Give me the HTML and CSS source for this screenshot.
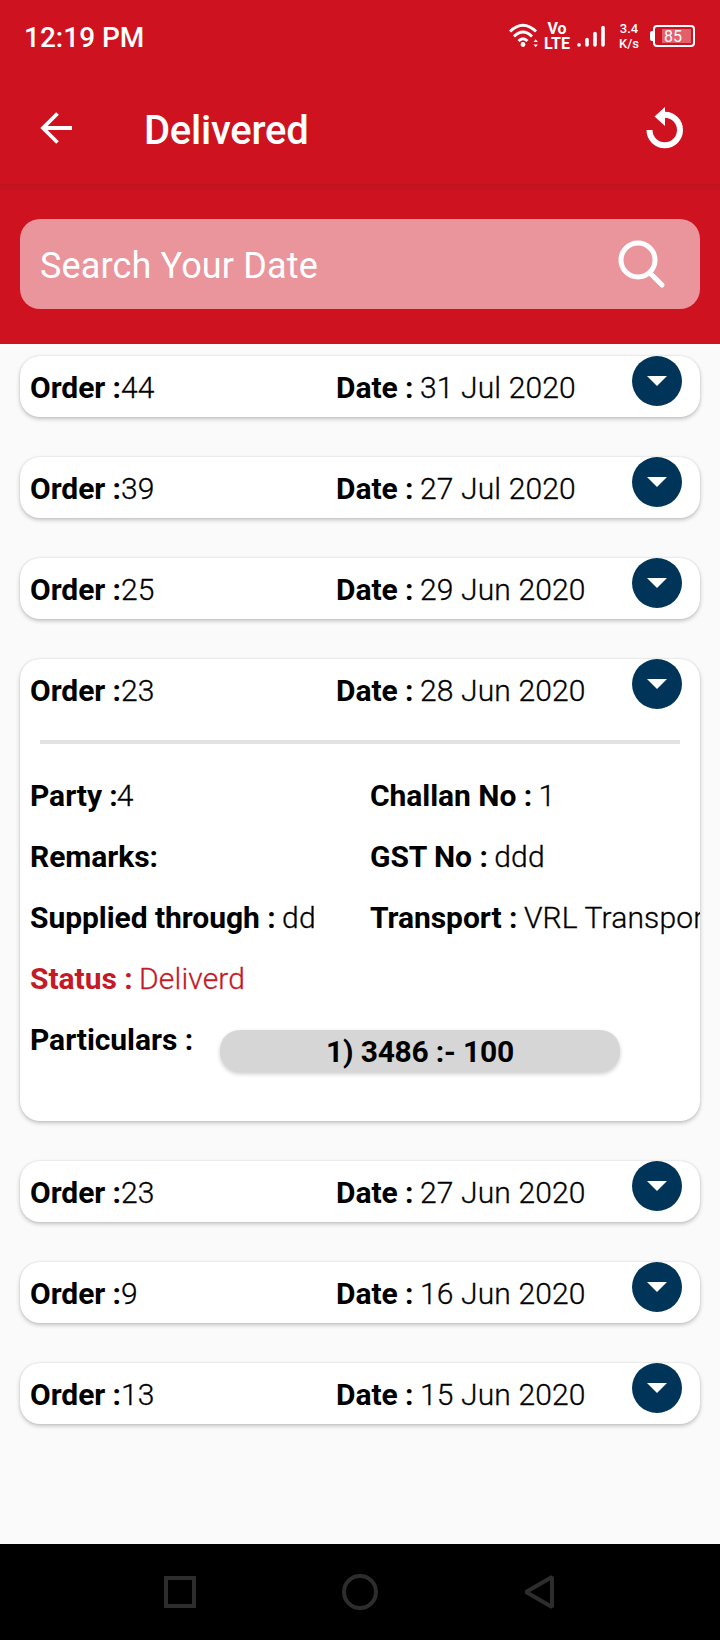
FILE: index.html
```html
<!DOCTYPE html>
<html lang="en">
<head>
<meta charset="utf-8">
<title>Delivered</title>
<link rel="stylesheet" href="styles.css">
</head>
<body>
<svg class="defs" width="0" height="0"><symbol id="toggle" viewBox="0 0 50 50"><circle cx="25" cy="25" r="25" fill="#003459"/><path d="M15 20h20L25 30z" fill="#fff"/></symbol></svg>
<div class="screen">
  <div class="statusbar">
    <span class="time">12:19 PM</span>
    <div class="indicators">
      <svg class="wifi" width="30" height="26" viewBox="0 0 30 26" fill="none" stroke="#fff" stroke-width="3"><path d="M1 8.500Q14 -4 27 8.500M5 13.500Q14 4.500 23 13.500M9.500 18Q14 13.500 18.500 18"/><circle cx="14" cy="21.500" r="2.400" fill="#fff" stroke="none"/><path d="M24.500 19l2.200-2.800 2.200 2.800zM24.500 21.500l2.200 2.800 2.200-2.800z" fill="#fff" stroke="none"/></svg>
      <div class="volte"><span>Vo</span><span>LTE</span></div>
      <svg class="signal" width="28" height="24" viewBox="0 0 28 24" stroke="#fff" stroke-width="3.600" stroke-linecap="round"><path d="M2 20.800v.2M10 15.500v5.500M18 9.500V21M26 3.500V21"/></svg>
      <div class="speed"><span>3.4</span><span>K/s</span></div>
      <div class="battery"><span class="nub"></span><span class="cell"><span class="level">85</span></span></div>
    </div>
  </div>
  <header class="toolbar">
    <svg class="back" width="32" height="32" viewBox="0 0 32 32" fill="none" stroke="#fff" stroke-width="3.800"><path d="M32 16H3M17.500 1.500L3 16l14.500 14.500"/></svg>
    <h1>Delivered</h1>
    <svg class="refresh" width="38" height="44" viewBox="0 0 38 44"><path d="M3.500 23a15.250 15.250 0 1 0 15.250-15.250" fill="none" stroke="#fff" stroke-width="6"/><path d="M8.500 9.500L19 0v19z" fill="#fff"/></svg>
  </header>
  <section class="searcharea">
    <div class="searchbox"><span class="placeholder">Search Your Date</span>
      <svg width="50" height="50" viewBox="0 0 50 50" fill="none" stroke="#fff" stroke-width="5" stroke-linecap="round"><circle cx="22" cy="21" r="17"/><path d="M34 34L46 46"/></svg>
    </div>
  </section>
  <main class="orders">
    <article class="card"><div class="head"><p class="order"><b>Order :</b>44</p><p><b>Date :</b> 31 Jul 2020</p></div><svg class="toggle"><use href="#toggle"/></svg></article>
    <article class="card"><div class="head"><p class="order"><b>Order :</b>39</p><p><b>Date :</b> 27 Jul 2020</p></div><svg class="toggle"><use href="#toggle"/></svg></article>
    <article class="card"><div class="head"><p class="order"><b>Order :</b>25</p><p><b>Date :</b> 29 Jun 2020</p></div><svg class="toggle"><use href="#toggle"/></svg></article>
    <article class="card open"><div class="head"><p class="order"><b>Order :</b>23</p><p><b>Date :</b> 28 Jun 2020</p></div><svg class="toggle"><use href="#toggle"/></svg>
      <div class="divider"></div>
      <div class="details">
        <p><b>Party :</b>4</p><p><b>Challan No :</b> 1</p>
        <p><b>Remarks:</b></p><p><b>GST No :</b> ddd</p>
        <p><b>Supplied through :</b> dd</p><p><b>Transport :</b> VRL Transport</p>
        <p class="state"><b>Status :</b> Deliverd</p>
      </div>
      <div class="particulars"><p><b>Particulars :</b></p><div class="pill"><b>1) 3486 :- 100</b></div></div>
    </article>
    <article class="card"><div class="head"><p class="order"><b>Order :</b>23</p><p><b>Date :</b> 27 Jun 2020</p></div><svg class="toggle"><use href="#toggle"/></svg></article>
    <article class="card"><div class="head"><p class="order"><b>Order :</b>9</p><p><b>Date :</b> 16 Jun 2020</p></div><svg class="toggle"><use href="#toggle"/></svg></article>
    <article class="card"><div class="head"><p class="order"><b>Order :</b>13</p><p><b>Date :</b> 15 Jun 2020</p></div><svg class="toggle"><use href="#toggle"/></svg></article>
  </main>
  <nav class="navbar">
    <svg width="36" height="36" viewBox="0 0 36 36"><path d="M4 4h28v28H4z"/></svg>
    <svg width="36" height="36" viewBox="0 0 36 36"><circle cx="18" cy="18" r="16"/></svg>
    <svg width="36" height="36" viewBox="0 0 36 36"><path d="M31 3v30L5 18z" stroke-linejoin="bevel"/></svg>
  </nav>
</div>
</body>
</html>
```
FILE: styles.css
```css
* { box-sizing: border-box; }
body { margin: 0; font-family: Roboto, "Liberation Sans", sans-serif; color: #000; }
p, h1 { margin: 0; }
.defs { position: absolute; }
.screen { width: 720px; height: 1640px; display: flex; flex-direction: column; background: #fafafa; overflow: hidden; }
.statusbar { height: 72px; background: #ce121f; color: #fff; display: flex; justify-content: space-between; padding: 0 25px 0 24px; }
.time { font-size: 28px; font-weight: 500; line-height: 32px; padding-top: 22px; }
.indicators { display: flex; align-items: flex-start; padding-top: 22px; }
.wifi { margin-top: 1px; }
.volte { display: flex; flex-direction: column; align-items: center; width: 26px; margin-left: 5px; font-size: 16px; font-weight: 700; line-height: 15px; margin-top: -1px; }
.signal { margin: 2px 0 0 7px; }
.speed { display: flex; flex-direction: column; align-items: center; width: 22px; margin: -1px 10px 0 13px; font-size: 13px; font-weight: 500; line-height: 15px; }
.battery { display: flex; align-items: center; padding-top: 3px; }
.nub { width: 3px; height: 10px; background: #fff; border-radius: 2px 0 0 2px; }
.cell { width: 42px; height: 22px; border: 2px solid #fff; border-radius: 4px; padding: 2px 2px 2px 7px; display: flex; }
.level { flex: 1; background: #e2606a; font-size: 16px; line-height: 15px; padding-left: 2px; }
.toolbar { height: 112px; background: #ce121f; color: #fff; display: flex; align-items: flex-start; padding: 0 36px 0 40px; }
.back { margin-top: 40px; }
h1 { font-size: 40px; font-weight: 500; line-height: 48px; letter-spacing: -.25px; margin: 35px auto 0 72px; }
.refresh { margin-top: 35px; }
.searcharea { height: 160px; background: linear-gradient(#bd141f, #ce121f 7px); padding: 35px 20px; }
.searchbox { height: 90px; background: #e9959b; border-radius: 20px; display: flex; align-items: center; justify-content: space-between; padding: 0 34px 0 20px; }
.placeholder { color: #fff; font-size: 36px; line-height: 42px; letter-spacing: .15px; padding-top: 4px; }
.orders { flex: 1; display: flex; flex-direction: column; gap: 40px; padding: 12px 20px; }
.card { position: relative; height: 61px; flex: none; background: #fff; border-radius: 20px; box-shadow: 0 2px 4px rgba(0,0,0,.22), 0 0 2px rgba(0,0,0,.12); font-size: 30px; font-weight: 300; letter-spacing: .15px; -webkit-text-stroke: .3px currentColor; line-height: 36px; white-space: nowrap; overflow: hidden; }
.card b { font-weight: 700; letter-spacing: -.05px; margin-right: -1px; -webkit-text-stroke: 0; }
.card .order b { margin-right: 0; }
.card.open { height: 462px; }
.head { display: flex; padding: 14px 0 0 10px; }
.order { width: 306px; }
.toggle { position: absolute; top: 0; right: 18px; width: 50px; height: 50px; }
.divider { height: 4px; background: #e2e2e2; margin: 31px 20px 0; }
.details { display: grid; grid-template-columns: 340px 1fr; grid-auto-rows: 61px; padding: 34px 0 0 10px; }
.state { color: #c41a28; }
.particulars { display: flex; padding-left: 10px; }
.particulars p { width: 190px; }
.pill { width: 400px; height: 42px; margin-top: 8px; background: #d6d6d6; border-radius: 20px; text-align: center; line-height: 44px; box-shadow: 0 2px 4px rgba(0,0,0,.2); }
.card .pill b { letter-spacing: -.22px; margin: 0; }
.navbar { height: 96px; background: #000; display: flex; justify-content: space-between; align-items: center; padding: 0 162px; }
.navbar svg { fill: none; stroke: #2d2d2d; stroke-width: 4; }
.navbar svg:last-child { margin-left: -1px; margin-right: 1px; }
```
